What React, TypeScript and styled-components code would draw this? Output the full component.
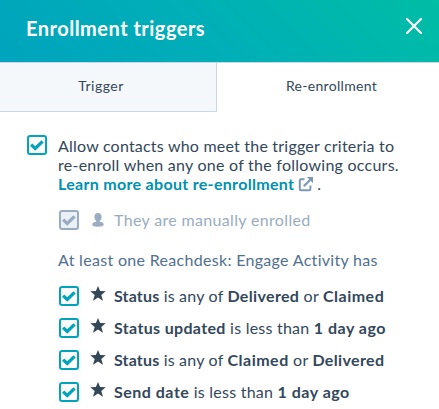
import React from 'react';
import styled, { createGlobalStyle } from 'styled-components';

const GlobalStyle = createGlobalStyle`
  *, *::before, *::after { box-sizing: border-box; }
  body { margin: 0; background: #fff; overflow: hidden; }
`;

const Panel = styled.main`
  width: 439px;
  height: 409px;
  overflow: hidden;
  background: #fff;
  color: #33475b;
  font: 400 16px/19px Lato, sans-serif;
`;

const Header = styled.header`
  display: flex;
  align-items: center;
  justify-content: space-between;
  height: 62px;
  padding: 0 17px 6px 26px;
  background: linear-gradient(45deg, #00a4bd 0%, #00afb7 48%, #00bda5 100%);
`;

const Title = styled.h1`
  margin: 0;
  color: #fff;
  font-size: 20px;
  line-height: 24px;
  font-weight: 700;
  letter-spacing: 0.49px;
`;

const CloseButton = styled.button`
  display: flex;
  margin: 2px 0 6px;
  padding: 0;
  border: 0;
  background: none;
`;

const Tabs = styled.nav`
  display: grid;
  grid-template-columns: 217px 1fr;
  height: 50px;
  border-top: 1px solid #cbd6e8;
`;

const Tab = styled.button<{ $active?: boolean }>`
  padding: ${p => (p.$active ? '0 0 3px 7px' : '0 14px 2px 0')};
  border: 0 solid #cbd6e8;
  border-width: ${p => (p.$active ? '0' : '0 1px 1px 0')};
  background: ${p => (p.$active ? '#fff' : '#f5f8fa')};
  color: #33475b;
  font: 400 14px/18px Lato, sans-serif;
  letter-spacing: ${p => (p.$active ? 0.3 : 0.5)}px;
`;

const Content = styled.section`
  padding: 23px 0 0 27px;
`;

const Allow = styled.label`
  display: flex;
  gap: 11px;
`;

const AllowText = styled.div`
  padding-top: 1px;
  white-space: nowrap;
`;

const Line = styled.div<{ $spacing: number }>`
  display: flex;
  height: 19px;
  letter-spacing: ${p => p.$spacing}px;
`;

const LearnLink = styled.a`
  display: flex;
  align-items: center;
  gap: 4px;
  margin-right: 3px;
  color: #0091ae;
  font-weight: 700;
  letter-spacing: 0.31px;
`;

const Conditions = styled.div`
  padding-left: 32px;
`;

const Condition = styled.label<{ $disabled?: boolean }>`
  display: flex;
  align-items: center;
  height: 20px;
  margin-top: ${p => (p.$disabled ? 17 : 12)}px;
  color: ${p => (p.$disabled ? '#99acc2' : '#33475b')};
  white-space: pre;
`;

const IconSlot = styled.span<{ $raise: number }>`
  display: flex;
  justify-content: center;
  width: 16px;
  margin: 0 8px 0 11px;
  padding-bottom: ${p => p.$raise}px;
`;

const Text = styled.span<{ $spacing: number }>`
  padding-bottom: 2px;
  letter-spacing: ${p => p.$spacing}px;
`;

const Strong = styled(Text).attrs({ as: 'strong' })`
  font-weight: 700;
`;

const GroupLabel = styled.p`
  margin: 20px 0 17px -1px;
  color: #516f90;
  letter-spacing: 0.31px;
  line-height: 19px;
`;

const CheckBox = styled.span<{ $disabled?: boolean }>`
  display: flex;
  flex: none;
  align-items: center;
  justify-content: center;
  width: 20px;
  height: 20px;
  border: 2px solid ${p => (p.$disabled ? '#99acc2' : '#00a4bd')};
  border-radius: 3px;
  background: ${p => (p.$disabled ? '#eaf0f6' : '#fff')};
  color: ${p => (p.$disabled ? '#99acc2' : '#00a4bd')};
`;

const Check = ({ disabled }: { disabled?: boolean }) => (
  <CheckBox $disabled={disabled}>
    <svg width="16" height="16" viewBox="0 0 16 16" fill="currentColor">
      <path d="M1 8.7 3.3 6.5 6.2 9.2 12.4 3.3 14.7 5.5 6.2 13.7Z" />
    </svg>
  </CheckBox>
);

const CloseIcon = () => (
  <svg width="16" height="16" viewBox="0 0 16 16">
    <path d="m1 1 14 14M15 1 1 15" stroke="#fff" strokeWidth="2.2" strokeLinecap="round" />
  </svg>
);

const ExternalIcon = () => (
  <svg width="16" height="16" viewBox="0 0 16 16" fill="none" stroke="#7c98b6">
    <path d="M6.5 3.2H3Q1.8 3.2 1.8 4.4V13Q1.8 14.2 3 14.2H11.2Q12.4 14.2 12.4 13V9.5" strokeWidth="2" />
    <path d="M5.8 10.2 12.5 3.5" strokeWidth="2.2" />
    <path d="M8.8 1H15V7.2Z" fill="#7c98b6" stroke="none" />
  </svg>
);

const PersonIcon = () => (
  <svg width="12" height="14" viewBox="0 0 12 14" fill="#99acc2">
    <path d="M6 0C3.7 0 2.4 1.6 2.4 3.8 2.4 6 3.4 7.3 4.3 8V8.8C2.2 9.1.3 9.8.3 11.6.3 13.2 2.5 13.7 6 13.7S11.7 13.2 11.7 11.6C11.7 9.8 9.8 9.1 7.7 8.8V8C8.6 7.3 9.6 6 9.6 3.8 9.6 1.6 8.3 0 6 0Z" />
  </svg>
);

const StarIcon = () => (
  <svg width="16" height="15" viewBox="0 0 16 15" fill="#33475b">
    <path d="m8 0 2.1 5.1 5.6.2-4.4 3.7 1.7 5.7L8 11.5l-5 3.2L4.7 9 .3 5.3l5.6-.2Z" />
  </svg>
);

type Part = { text: string; spacing: number; bold?: boolean };

const conditions: Part[][] = [
  [
    { text: 'Status', spacing: 0.16, bold: true },
    { text: ' is any of ', spacing: 0.2 },
    { text: 'Delivered', spacing: 0.34, bold: true },
    { text: ' or ', spacing: 0.23 },
    { text: 'Claimed', spacing: 0.5, bold: true },
  ],
  [
    { text: 'Status updated', spacing: 0.34, bold: true },
    { text: ' is less than ', spacing: 0.23 },
    { text: '1 day ago', spacing: 0.5, bold: true },
  ],
  [
    { text: 'Status', spacing: 0.16, bold: true },
    { text: ' is any of ', spacing: 0.2 },
    { text: 'Claimed', spacing: 0.5, bold: true },
    { text: ' or ', spacing: 0.23 },
    { text: 'Delivered', spacing: 0.36, bold: true },
  ],
  [
    { text: 'Send date', spacing: 0.5, bold: true },
    { text: ' is less than ', spacing: 0.25 },
    { text: '1 day ago', spacing: 0.5, bold: true },
  ],
];

export default function App() {
  return (
    <>
      <GlobalStyle />
      <Panel>
        <Header>
          <Title>Enrollment triggers</Title>
          <CloseButton aria-label="Close"><CloseIcon /></CloseButton>
        </Header>
        <Tabs>
          <Tab>Trigger</Tab>
          <Tab $active>Re-enrollment</Tab>
        </Tabs>
        <Content>
          <Allow>
            <Check />
            <AllowText>
              <Line $spacing={0.21}>Allow contacts who meet the trigger criteria to</Line>
              <Line $spacing={0.25}>re-enroll when any one of the following occurs.</Line>
              <Line $spacing={0}>
                <LearnLink>Learn more about re-enrollment <ExternalIcon /></LearnLink>.
              </Line>
            </AllowText>
          </Allow>
          <Conditions>
            <Condition $disabled>
              <Check disabled />
              <IconSlot $raise={0}><PersonIcon /></IconSlot>
              <Text $spacing={0.34}>They are manually enrolled</Text>
            </Condition>
            <GroupLabel>At least one Reachdesk: Engage Activity has</GroupLabel>
            {conditions.map((parts, i) => (
              <Condition key={i}>
                <Check />
                <IconSlot $raise={5}><StarIcon /></IconSlot>
                {parts.map((part, j) =>
                  part.bold
                    ? <Strong key={j} $spacing={part.spacing}>{part.text}</Strong>
                    : <Text key={j} $spacing={part.spacing}>{part.text}</Text>
                )}
              </Condition>
            ))}
          </Conditions>
        </Content>
      </Panel>
    </>
  );
}
